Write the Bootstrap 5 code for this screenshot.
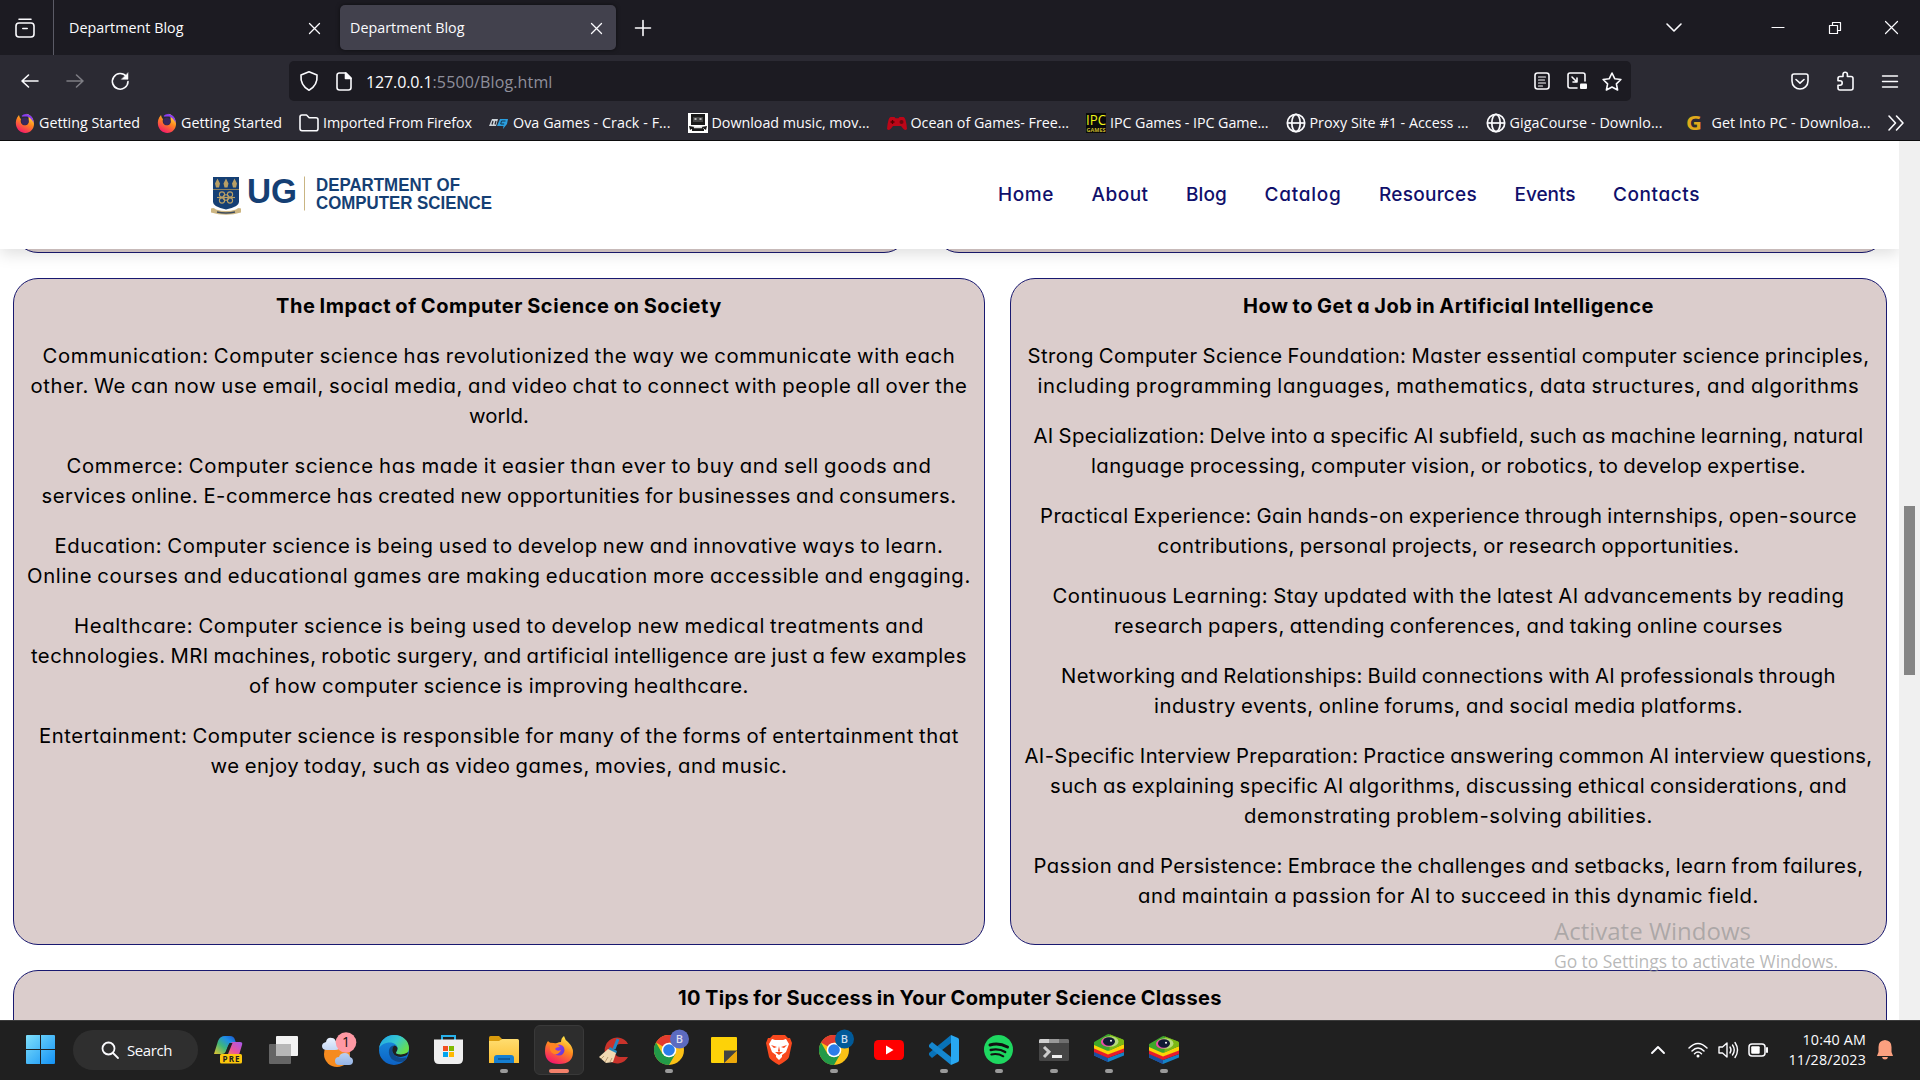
<!DOCTYPE html>
<html lang="en">
<head>
<meta charset="utf-8">
<title>Department Blog</title>
<link href="https://cdn.jsdelivr.net/npm/bootstrap@5.3.0/dist/css/bootstrap.min.css" rel="stylesheet">
<style>
body{width:1920px;height:1080px;overflow:hidden;background:#fff;font-family:"Open Sans","Noto Sans",sans-serif;font-size:14.3px;line-height:20px;color:#fbfbfe}
svg{display:block;flex:none;overflow:visible}
[data-w]{white-space:nowrap;display:inline-block;flex:none}
.ic{fill:none;stroke:#fbfbfe;stroke-width:1.6;stroke-linecap:round;stroke-linejoin:round}
.tabstrip{height:55px;background:#1c1b22}
.viewbtn{width:54px;height:55px;border-right:1px solid #5b5b66;padding-left:15px}
.tab-item{width:276px;height:45px;padding:1px 14px 0 10px;border-radius:5px}
.tab-item.current{background:#42414d;box-shadow:0 0 4px #0008}
.tab-first{margin-left:5px;margin-right:5px;padding-right:15px}
.toolbar{height:50px;background:#2b2a33;padding-top:2px}
.urlbar{width:1342px;height:40px;background:#1c1b22;border-radius:5px;margin-left:160px;padding:0 10px;font-size:16px}
.urlbar span{padding-top:1px}
.winctl{padding-right:22px}
.dimmed{color:#8f8f9b}
.bookmarks{height:36px;background:#2b2a33;border-bottom:1px solid #0c0c0d;gap:17px;padding:1px 0 0 15px}
.bookmarks>div{gap:4px}
.bmk{width:20px;height:20px}
.viewport{height:879px;overflow:hidden;position:relative;background:#fff}
.pagehead{height:108px;background:#fff;box-shadow:0 5px 15px rgba(0,0,0,.13);position:relative;z-index:2;width:1899px;padding-left:210px;padding-right:199px}
.pagehead nav{gap:37.5px;font-family:Inter,sans-serif;font-weight:500;font-size:19px;color:#10106b;font-feature-settings:"cv11"}
.posts{width:1899px;padding:0 12px 0 13px;font-family:Inter,sans-serif;font-size:20.3px;line-height:30px;color:#000;font-feature-settings:"cv11";word-spacing:-1.2px}
.post{background:#dbcdcc;border:1px solid #191970;border-radius:25px;text-align:center}
.post p,.post h2{margin:0 0 20px;font-size:inherit;line-height:30px}
.post h2{font-weight:700;font-size:20px}
.post .ln{display:block;height:30px}
.post .ln>span{display:inline-block}
.stub{height:60px;margin-top:-56px}
.stub-a{width:896px}
.pair{gap:25px}
.pair-main{margin-top:25px}
.post-a{width:972px;height:667px;padding-top:12px}
.post-b{width:877px;height:667px;padding-top:12px}
.post-c{height:120px;margin-top:25px;padding-top:12px}
.scroller{position:absolute;right:0;top:0;width:21px;height:879px;background:#f0f0f0;padding:365px 0 0 5px;z-index:3}
.thumb{width:11px;height:169px;background:#858585}
.watermark{position:absolute;left:1554px;top:774px;color:rgba(148,148,148,.66);z-index:3}
.wm1{font-size:24px;line-height:32px}
.wm2{font-size:17.5px;line-height:28px}
.taskbar{height:60px;background:#202020;border-top:1px solid #3b3b3b;padding:0 0 2px 26px}
.searchpill{width:125px;height:40px;border-radius:20px;background:#2f2f2f;margin-left:18px;margin-right:3px;padding-left:28px;gap:8px;font-size:15px}
.slot{width:55px;height:59px;position:relative;flex:none}
.slot.run::after{content:"";position:absolute;left:23.5px;bottom:6px;width:8px;height:4px;border-radius:2px;background:#9a9a9a}
.slot.live::before{content:"";position:absolute;left:3px;top:5px;width:50px;height:50px;border-radius:6px;background:#2d2d2d;border:1px solid #393939}
.slot.live::after{left:18px;width:20px;background:#f4816b}
.slot svg{position:relative}
.tray{margin-left:auto;padding-right:27px}
</style>
<script src="https://cdn.jsdelivr.net/npm/bootstrap@5.3.0/dist/js/bootstrap.bundle.min.js"></script>
</head>
<body>
<svg width="0" height="0" class="position-absolute">
<defs>
<linearGradient id="gWin" x1="0" y1="0" x2="1" y2="1"><stop offset="0" stop-color="#7fe0fb"/><stop offset="1" stop-color="#1392f5"/></linearGradient>
<linearGradient id="gFx" x1=".8" y1="0" x2=".3" y2="1"><stop offset="0" stop-color="#fff44f"/><stop offset=".45" stop-color="#ff8a1e"/><stop offset="1" stop-color="#f5156c"/></linearGradient>
<linearGradient id="gPu" x1="0" y1="0" x2="1" y2="1"><stop offset="0" stop-color="#a33bf0"/><stop offset="1" stop-color="#5a3bd8"/></linearGradient>
<linearGradient id="gEd" x1="0" y1="0" x2="1" y2=".6"><stop offset="0" stop-color="#1da1e8"/><stop offset=".55" stop-color="#36c8d0"/><stop offset="1" stop-color="#68e04a"/></linearGradient>
<linearGradient id="gEb" x1="0" y1="0" x2="0" y2="1"><stop offset="0" stop-color="#1a90e0"/><stop offset="1" stop-color="#0c62c4"/></linearGradient>
<linearGradient id="gFo" x1="0" y1="0" x2="0" y2="1"><stop offset="0" stop-color="#ffdd70"/><stop offset="1" stop-color="#fcbf32"/></linearGradient>
<linearGradient id="gCo" x1="0" y1="1" x2="1" y2="0"><stop offset="0" stop-color="#e8c52c"/><stop offset=".4" stop-color="#3fb67a"/><stop offset=".7" stop-color="#1f8fe8"/><stop offset="1" stop-color="#1b50c8"/></linearGradient>
<linearGradient id="gCp" x1="1" y1="0" x2="0" y2="1"><stop offset="0" stop-color="#a657f0"/><stop offset=".6" stop-color="#e8559a"/><stop offset="1" stop-color="#f79058"/></linearGradient>
<linearGradient id="gCl" x1="0" y1="0" x2="0" y2="1"><stop offset="0" stop-color="#eaf2ff"/><stop offset="1" stop-color="#95b5e6"/></linearGradient>
<symbol id="fxs" viewBox="0 0 20 20"><path d="M4 2C1 5 .5 9 1 12c1 5 5 8 9.300 7.900 5-.1 8.700-4 8.700-9C19 6 16 2 11.500.8c1.800 2 2.500 4 2 6.200.8 3-1 5.300-3.600 5.300C6.500 12.300 5 9 6 6 4.800 5 4.300 3.500 4 2z" fill="url(#gFx)"/><path d="M6.500 3C9 .2 13 .2 16 3c2 2 2.800 4.500 2.600 7C17 6 14 3.500 11 3.500S7.500 4 6.500 3z" fill="#8a3df0"/><path d="M6.500 6.200C8 4.500 11 4 13 6c1.500 3 0 6-3 6S5.700 9 6.500 6.200z" fill="#38285e"/></symbol>
<symbol id="globe" viewBox="0 0 20 20"><g fill="none" stroke="#fbfbfe" stroke-width="1.700"><circle cx="10" cy="10" r="8.700"/><ellipse cx="10" cy="10" rx="4.200" ry="8.700"/><path d="M1.300 10h17.400"/></g></symbol>
<symbol id="chrome" viewBox="0 0 30 30"><circle cx="15" cy="15" r="15" fill="#fbc116"/><path d="M15 15 2 7.500A15 15 0 0 1 28 7.500H15z" fill="#e33b2e"/><path d="M2 7.500A15 15 0 0 0 15 30l6.500-11.300H8.500z" fill="#229a48"/><circle cx="15" cy="15" r="7.300" fill="#fff"/><circle cx="15" cy="15" r="5.800" fill="#2b7de9"/></symbol>
<symbol id="bstack" viewBox="0 0 30 28"><path d="M0 18v3.500L14 28l16-6.500V18l-16 6z" fill="#1583c7"/><path d="M0 18v3.500L14 28v-4z" fill="#1c4fa0"/><path d="M0 14v4l14 6 16-6v-4l-16 6z" fill="#e81b2c"/><path d="M0 10v4.500l14 6 16-6V10l-16 6z" fill="#fdd306"/><path d="M0 8.500Q0 8 1 7.500L13 .4q1.500-.6 3 0L29 5.500q1 .5 1 1.500v3L15.500 16.500q-1.500.6-3 0L0 11z" fill="#3fa62b"/><path d="M16 .4 29 5.500q1 .5 1 1.500v3l-14.500 6.500z" fill="#7cb815"/><ellipse cx="16" cy="7.500" rx="8.500" ry="5.200" fill="#b8dc7c"/><ellipse cx="13.500" cy="8" rx="6.500" ry="4.500" fill="#ec4aa6"/><ellipse cx="15" cy="7.500" rx="6" ry="4.200" fill="#101a34"/><circle cx="17" cy="6.800" r="1" fill="#fff"/></symbol>
</defs></svg>

<div class="tabstrip d-flex align-items-center">
  <div class="viewbtn d-flex align-items-center"><svg class="ic" width="20" height="20" viewBox="0 0 20 20"><rect x="1" y="5" width="18" height="14" rx="3"/><path d="M4 1.200h12M7.800 10.500h4.400"/></svg></div>
  <div class="tab-item tab-first d-flex align-items-center justify-content-between"><span data-w="114.500">Department Blog</span><svg class="ic" width="11" height="11"><path d="m.5.5 10 10m0-10-10 10" stroke-width="1.300"/></svg></div>
  <div class="tab-item current d-flex align-items-center justify-content-between"><span data-w="114.500">Department Blog</span><svg class="ic" width="11" height="11"><path d="m.5.5 10 10m0-10-10 10" stroke-width="1.300"/></svg></div>
  <svg class="ic ms-3" width="22" height="16"><path d="M8 .5v15M.5 8h15" transform="translate(3)"/></svg>
  <div class="winctl d-flex align-items-center ms-auto">
    <svg class="ic" width="16" height="9" style="margin-right:90px"><path d="m1 1 7 7 7-7"/></svg>
    <svg class="ic" width="12" height="12" style="margin-right:45px"><path d="M0 5.500h12" stroke-width="1.200"/></svg>
    <svg class="ic" width="12" height="12" style="margin-right:44px"><path d="M.5 3.500h8v8h-8zM3.500 3.500v-3h8v8h-3" stroke-width="1.200"/></svg>
    <svg class="ic" width="13" height="13"><path d="m.5.5 12 12m0-12-12 12" stroke-width="1.200"/></svg>
  </div>
</div>

<div class="toolbar d-flex align-items-center">
  <svg class="ic" width="18" height="14" style="margin-left:21px"><path d="M17 7H1M7.500 1 1 7l6.500 6"/></svg>
  <svg class="ic" width="18" height="14" style="margin-left:27px;opacity:.4"><path d="M1 7h16M10.500 1 17 7l-6.500 6"/></svg>
  <svg class="ic" width="18" height="18" style="margin-left:27px"><path d="M15.300 4.500A7.800 7.800 0 1 0 17 9.500"/><path d="M17 1v6.300h-6.300z" fill="#fbfbfe" stroke-width=".5"/></svg>
  <div class="urlbar d-flex align-items-center">
    <svg class="ic" width="20" height="20"><path d="M10 .8 18 4c.6 7-1.200 11.500-8 15.200C3.200 15.500 1.400 11 2 4z"/></svg>
    <svg class="ic" width="16" height="19" style="margin-left:17px"><path d="M3 1h7l5 5v9.500a2.500 2.500 0 0 1-2.500 2.500h-9A2.500 2.500 0 0 1 1 15.500V3.500A2.500 2.500 0 0 1 3 1z"/><path d="M9.500 1v5.500H15z" fill="#fbfbfe"/></svg>
    <span data-w="66.500" style="margin-left:14px">127.0.0.1</span><span class="dimmed" data-w="120">:5500/Blog.html</span>
    <svg class="ic ms-auto" width="16" height="18"><rect x="1" y="1" width="14" height="16" rx="2.500"/><path d="M4.500 5h7M4.500 8h6M4.500 11h7M4.500 14h4" stroke-width="1.200"/></svg>
    <svg class="ic" width="20" height="18" style="margin-left:17px"><path d="M10 16H3a2 2 0 0 1-2-2V3a2 2 0 0 1 2-2h13a2 2 0 0 1 2 2v6M5 5l5 5m0-4v4H6"/><rect x="13" y="11.500" width="7" height="5.500" rx="1" fill="#fbfbfe" stroke="none"/></svg>
    <svg class="ic" width="20" height="19" style="margin-left:15px;margin-right:-1px"><path d="m10 1 2.700 5.700 6.200.8-4.500 4.300 1.200 6.200L10 15l-5.600 3 1.200-6.200L1.100 7.500l6.200-.8z"/></svg>
  </div>
  <svg class="ic" width="18" height="17" style="margin-left:160px"><path d="M3 1h12a2 2 0 0 1 2 2v5c0 5-4 8-8 8s-8-3-8-8V3a2 2 0 0 1 2-2zM5 6.500l4 3.700 4-3.700"/></svg>
  <svg class="ic" width="18" height="20" style="margin-left:27px"><path d="M2 7.500q0-2 2-2h3V3.400a2.200 2.200 0 0 1 4.400 0v2.100H15q2 0 2 2V17q0 2-2 2H4q-2 0-2-2v-2.800h2a2.200 2.200 0 0 0 0-4.400H2z"/></svg>
  <svg class="ic" width="16" height="13" style="margin-left:28px"><path d="M.5 1h15M.5 6.500h15M.5 12h15" stroke-width="1.400"/></svg>
</div>

<div class="bookmarks d-flex align-items-center">
  <div class="d-flex align-items-center"><svg class="bmk"><use href="#fxs"/></svg><span data-w="101">Getting Started</span></div>
  <div class="d-flex align-items-center"><svg class="bmk"><use href="#fxs"/></svg><span data-w="101">Getting Started</span></div>
  <div class="d-flex align-items-center"><svg class="bmk ic" viewBox="0 0 20 20"><path d="M1 15.500V4q0-2 2-2h4.500l2.700 2.700H17q2 0 2 2v9q0 2-2 2H3q-2 0-2-2.200z"/></svg><span data-w="149">Imported From Firefox</span></div>
  <div class="d-flex align-items-center"><svg class="bmk" viewBox="0 0 20 20"><path d="M3 6h6l-2 7H0z" fill="#cdd3d9"/><path d="M4 8 3 11.500m4-3.500-1 3.500" stroke="#2b2a33" stroke-width="1.300" fill="none"/><path d="M11 6h8l-1 5-4 5 .5-3H8z" fill="#2b9fe0"/><path d="M16.500 8h-4l-.8 3h3.500" stroke="#12344d" fill="none"/></svg><span data-w="157.500">Ova Games - Crack - F...</span></div>
  <div class="d-flex align-items-center"><svg class="bmk" viewBox="0 0 20 20"><path d="M0 0h20v20H0z" fill="#fff"/><path d="M3 1h14v11H3zM1 13l6 1-5 3zM19 13l-6 1 5 3zM4 15h12v3H4z" fill="#191919"/><path d="M5 4h10v5H5z" fill="#444"/><path d="M6.500 6h2m3 0h2M6 14.500h8" stroke="#ddd" stroke-width="1.500"/></svg><span data-w="158">Download music, mov...</span></div>
  <div class="d-flex align-items-center"><svg class="bmk" viewBox="0 0 20 20"><path d="M3.500 4h4l1 1.200h3L12.500 4h4Q19 4.500 20 16q-2 2-4-.5l-2-2.500H6l-2 2.500Q2 18 0 16 1 4.500 3.500 4z" fill="#bd0618"/><path d="M5.500 7v4M3.500 9h4" stroke="#500" stroke-width="1.300"/><circle cx="14.500" cy="9" r="2" fill="#6c0610"/></svg><span data-w="158.500">Ocean of Games- Free...</span></div>
  <div class="d-flex align-items-center"><svg class="bmk" viewBox="0 0 20 20"><path d="M0 0h20v20H0z" fill="#0a0a0a"/><text x="0" y="11.500" textLength="20" lengthAdjust="spacingAndGlyphs" font-family="Open Sans" font-size="14.500" fill="#eff319">IPC</text><text x=".5" y="19" textLength="19" lengthAdjust="spacingAndGlyphs" font-family="Open Sans" font-weight="700" font-size="6" fill="#c8b72a">GAMES</text></svg><span data-w="158.500">IPC Games - IPC Game...</span></div>
  <div class="d-flex align-items-center"><svg class="bmk"><use href="#globe"/></svg><span data-w="159">Proxy Site #1 - Access ...</span></div>
  <div class="d-flex align-items-center"><svg class="bmk"><use href="#globe"/></svg><span data-w="153">GigaCourse - Downlo...</span></div>
  <div class="d-flex align-items-center ps-1 ms-1"><svg class="bmk" viewBox="0 0 20 20"><text x="-2" y="17" textLength="16" lengthAdjust="spacingAndGlyphs" font-family="Open Sans" font-weight="700" font-size="20" fill="#e0a91b">G</text></svg><span data-w="159">Get Into PC - Downloa...</span></div>
  <svg class="ic" width="16" height="14"><path d="m1 0 6.500 7L1 14M8.500 0 15 7l-6.500 7"/></svg>
</div>

<main class="viewport">
  <header class="pagehead d-flex align-items-center justify-content-between">
    <svg width="290" height="44" viewBox="210 173.500 290 44" font-family="Liberation Sans,Arial,sans-serif" font-weight="700" fill="#153f74">
      <path d="M213 177.500h26v25q0 5-13 7.500-13-2.500-13-7.500z"/>
      <path d="M213 190h26" stroke="#a9925c" stroke-width=".8"/>
      <g fill="#b89f65"><path d="m217.500 179 2.500 5-1 4h-3l-1-4zM226 179l2.500 5-1 4h-3l-1-4zM234.500 179l2.500 5-1 4h-3l-1-4z"/></g>
      <g fill="none" stroke="#b89f65" stroke-width="1.100"><circle cx="222" cy="195" r="2.600"/><circle cx="230" cy="195" r="2.600"/><circle cx="222" cy="201" r="2.600"/><circle cx="230" cy="201" r="2.600"/><circle cx="226" cy="198" r="2.800"/><path d="M217 198h18"/></g>
      <path d="M211 209q3-1.500 5 1 10 3 20 0 2-2.500 5-1v4q-15 4.500-30 0z" fill="#cdb682"/><path d="M217 212.500q9 2 18 0" stroke="#3d4b5c" stroke-width="1.500" fill="none"/>
      <text x="247" y="203.500" font-size="35.500" textLength="50" lengthAdjust="spacingAndGlyphs">UG</text>
      <path d="M304.500 177v34" stroke="#c9b583"/>
      <text x="316" y="191.300" font-size="17.800" textLength="144" lengthAdjust="spacingAndGlyphs">DEPARTMENT OF</text>
      <text x="316" y="209.500" font-size="17.800" textLength="176" lengthAdjust="spacingAndGlyphs">COMPUTER SCIENCE</text>
    </svg>
    <nav class="d-flex"><span data-w="56">Home</span><span data-w="57">About</span><span data-w="41">Blog</span><span data-w="77">Catalog</span><span data-w="98">Resources</span><span data-w="61">Events</span><span data-w="87">Contacts</span></nav>
  </header>

  <div class="posts">
    <div class="d-flex pair"><div class="post stub stub-a"></div><div class="post stub flex-grow-1"></div></div>
    <div class="d-flex pair pair-main">
      <article class="post post-a">
        <h2><span data-w="446">The Impact of Computer Science on Society</span></h2>
        <p><span class="ln"><span data-w="913">Communication: Computer science has revolutionized the way we communicate with each</span></span><span class="ln"><span data-w="937">other. We can now use email, social media, and video chat to connect with people all over the</span></span><span class="ln"><span data-w="60">world.</span></span></p>
        <p><span class="ln"><span data-w="865">Commerce: Computer science has made it easier than ever to buy and sell goods and</span></span><span class="ln"><span data-w="915">services online. E-commerce has created new opportunities for businesses and consumers.</span></span></p>
        <p><span class="ln"><span data-w="889">Education: Computer science is being used to develop new and innovative ways to learn.</span></span><span class="ln"><span data-w="944">Online courses and educational games are making education more accessible and engaging.</span></span></p>
        <p><span class="ln"><span data-w="850">Healthcare: Computer science is being used to develop new medical treatments and</span></span><span class="ln"><span data-w="936">technologies. MRI machines, robotic surgery, and artificial intelligence are just a few examples</span></span><span class="ln"><span data-w="500">of how computer science is improving healthcare.</span></span></p>
        <p><span class="ln"><span data-w="920">Entertainment: Computer science is responsible for many of the forms of entertainment that</span></span><span class="ln"><span data-w="577">we enjoy today, such as video games, movies, and music.</span></span></p>
      </article>
      <article class="post post-b">
        <h2><span data-w="411">How to Get a Job in Artificial Intelligence</span></h2>
        <p><span class="ln"><span data-w="842">Strong Computer Science Foundation: Master essential computer science principles,</span></span><span class="ln"><span data-w="822">including programming languages, mathematics, data structures, and algorithms</span></span></p>
        <p><span class="ln"><span data-w="830">AI Specialization: Delve into a specific AI subfield, such as machine learning, natural</span></span><span class="ln"><span data-w="715">language processing, computer vision, or robotics, to develop expertise.</span></span></p>
        <p><span class="ln"><span data-w="817">Practical Experience: Gain hands-on experience through internships, open-source</span></span><span class="ln"><span data-w="582">contributions, personal projects, or research opportunities.</span></span></p>
        <p><span class="ln"><span data-w="792">Continuous Learning: Stay updated with the latest AI advancements by reading</span></span><span class="ln"><span data-w="669">research papers, attending conferences, and taking online courses</span></span></p>
        <p><span class="ln"><span data-w="775">Networking and Relationships: Build connections with AI professionals through</span></span><span class="ln"><span data-w="589">industry events, online forums, and social media platforms.</span></span></p>
        <p><span class="ln"><span data-w="848">AI-Specific Interview Preparation: Practice answering common AI interview questions,</span></span><span class="ln"><span data-w="797">such as explaining specific AI algorithms, discussing ethical considerations, and</span></span><span class="ln"><span data-w="409">demonstrating problem-solving abilities.</span></span></p>
        <p><span class="ln"><span data-w="830">Passion and Persistence: Embrace the challenges and setbacks, learn from failures,</span></span><span class="ln"><span data-w="621">and maintain a passion for AI to succeed in this dynamic field.</span></span></p>
      </article>
    </div>
    <article class="post post-c"><h2><span data-w="544">10 Tips for Success in Your Computer Science Classes</span></h2></article>
  </div>
  <div class="scroller"><div class="thumb"></div></div>
  <div class="watermark"><div class="wm1"><span data-w="197">Activate Windows</span></div><div class="wm2"><span data-w="284">Go to Settings to activate Windows.</span></div></div>
</main>

<footer class="taskbar d-flex align-items-center">
  <svg width="29" height="29" viewBox="0 0 29 29"><path d="M0 1q0-1 1-1h13v14H0zM15 0h13q1 0 1 1v13H15zM0 15h14v14H1q-1 0-1-1zM15 15h14v13q0 1-1 1H15z" fill="url(#gWin)"/></svg>
  <div class="searchpill d-flex align-items-center"><svg class="ic" width="18" height="18"><circle cx="7.500" cy="7.500" r="6" stroke-width="1.800"/><path d="m12 12 5 5" stroke-width="1.800"/></svg><span data-w="45">Search</span></div>
  <div class="slot d-flex align-items-center justify-content-center"><svg width="29" height="29" viewBox="0 0 29 29"><path d="M0 19 4 6q2-5 7-5h5q4 0 5 4l1 3h-4q-3 0-4 3l-2 5q-1 3-4 3H1z" fill="url(#gCo)"/><path d="M12 20 16 9q1-2 3-2h7q3 0 2 3l-3 10z" fill="url(#gCp)"/><path d="M11 19 15.500 8h3L14 19z" fill="#202020"/><rect x="6" y="19" width="22" height="9.500" rx="1.500" fill="#fdc70c"/><text x="8.500" y="26.800" font-size="8" font-weight="700" textLength="17" fill="#202020">PRE</text></svg></div>
  <div class="slot d-flex align-items-center justify-content-center"><svg width="29" height="28" viewBox="0 0 29 28"><rect y="8" width="22" height="20" rx="1" fill="#656565"/><rect x="7" width="22" height="20" rx="1" fill="#f2f2f2"/><path d="M7 8h15v12H7z" fill="#b7b7b7"/></svg></div>
  <div class="slot d-flex align-items-center justify-content-center"><svg width="34" height="34" viewBox="0 0 34 34"><circle cx="15" cy="21" r="13" fill="#f68b1f"/><path d="M5 17q-5 0-5-4 0-3 4-4 1-5 6-4 3 0 4 4 4 1 4 4 0 4-5 4zM17 32q-4 0-4-4t4-4q1-4 6-4 4 0 5 4 3 1 3 4 0 4-4 4z" fill="url(#gCl)"/><circle cx="24" cy="9.500" r="10.300" fill="#ff99a4"/><text x="24" y="14.300" text-anchor="middle" font-size="14" fill="#111">1</text></svg></div>
  <div class="slot d-flex align-items-center justify-content-center"><svg width="30" height="30" viewBox="0 0 30 30"><circle cx="15" cy="15" r="15" fill="url(#gEb)"/><path d="M0 14C1 5 8 0 15 0c9 0 15 6 15 13 0 5-4 7-8 7-3 0-5-1-5-2.500 0-1 1.500-1.500 1.500-4C18.500 10 15 7.500 11 7.500 6 7.500 1 10 0 14z" fill="url(#gEd)"/><path d="M10 15c-1 7 4 12 11 12 3 0 6-1.500 7-4l-1.500-.5C22 24 15 22 13.500 17c-1-3 0-5 2-6.500-3 0-5 2-5.500 4.500z" fill="#114a8b"/><path d="M17 18.500C16.500 17 18.500 16 18.500 13.500c0-1.500-1-2.500-3-3-3 2-3 6.500 0 9.500 4 3 9 2 12.500 0l1.500-3q-6 4-12.500 1.500z" fill="#202020"/></svg></div>
  <div class="slot d-flex align-items-center justify-content-center"><svg width="29" height="29" viewBox="0 0 29 29"><path d="M8 6V1h13v5" fill="none" stroke="#28b1ea" stroke-width="2"/><path d="M0 4.500h29V24q0 5-5 5H5q-5 0-5-5z" fill="#efefef"/><path d="M9 11h5v5H9z" fill="#f25022"/><path d="M15 11h5v5h-5z" fill="#7fba00"/><path d="M9 17h5v5H9z" fill="#00a4ef"/><path d="M15 17h5v5h-5z" fill="#ffb900"/></svg></div>
  <div class="slot run d-flex align-items-center justify-content-center"><svg width="30" height="27" viewBox="0 0 30 27"><path d="M0 1.500Q0 0 1.500 0H10l3 3-2 4H0z" fill="#d99b0c"/><path d="M0 5h10l3-2h15.500Q30 3 30 4.500V27H0z" fill="url(#gFo)"/><path d="M5 27v-5q0-3 3-3h14q3 0 3 3v5z" fill="#167fd1"/><path d="M9 23h12" stroke="#0b4a85" stroke-width="1.300"/></svg></div>
  <div class="slot run live d-flex align-items-center justify-content-center"><svg width="28" height="28" viewBox="0 0 28 28"><path d="M3 5q2 3 5 3l4-1q2-1 4-1Q16 2 19 0q1 4 4 6 5 5 5 10 0 12-14 12T0 15q0-6 3-10z" fill="url(#gFx)"/><circle cx="14" cy="14" r="5.500" fill="url(#gPu)"/><path d="M2 6q3 1 7 1 4 1 6 4-4 0-5 2 2 3 6 1-2 5-7 4-5-2-4-8z" fill="#ff8422"/></svg></div>
  <div class="slot d-flex align-items-center justify-content-center"><svg width="30" height="28" viewBox="0 0 30 28"><path d="M29 8A12.500 13 0 1 0 29 21h-8a6 6.500 0 1 1 0-13z" fill="#c9332b"/><path d="m19 3-4 10" stroke="#2088c8" stroke-width="3"/><path d="m11 11 7 4-1 3-8-4z" fill="#2588bb"/><path d="m9 13 8 4-3 9-7 1-7-6z" fill="#f1d9b1"/><path d="m5 20-3 3m7-2-3 5m7-4-2 4" stroke="#a88a62" stroke-width=".8"/></svg></div>
  <div class="slot run d-flex align-items-center justify-content-center"><svg width="30" height="30" viewBox="0 0 30 30"><use href="#chrome" width="30" height="30"/><circle cx="25.500" cy="4" r="9.500" fill="#5c6bc0"/><text x="25.500" y="8" text-anchor="middle" font-size="11" font-weight="600" fill="#dde">B</text></svg></div>
  <div class="slot d-flex align-items-center justify-content-center"><svg width="26" height="26" viewBox="0 0 26 26"><path d="M0 1q0-1 1-1h24q1 0 1 1v12L13 26H1q-1 0-1-1z" fill="#fdd208"/><path d="M26 13 13 26h12q1 0 1-1z" fill="#eda90b"/><path d="M13 13.500h13L13 26z" fill="#424242"/></svg></div>
  <div class="slot d-flex align-items-center justify-content-center"><svg width="26" height="30" viewBox="0 0 26 30"><path d="M7 0h12l3 3h2l2 5-3 14q-1 3-10 8Q4 25 3 22L0 8l2-5h2z" fill="#f9491e"/><path d="m6 4 3 1h8l3-1 3 5-3 8-4 3v2l-3 3-3-3v-2l-4-3-3-8z" fill="#fff"/><path d="m5 10 6 2-3 1zM21 10l-6 2 3 1zM13 11l-1 5 1 1 1-1zM9 17l4 3 4-3" fill="#f9491e"/></svg></div>
  <div class="slot run d-flex align-items-center justify-content-center"><svg width="30" height="30" viewBox="0 0 30 30"><use href="#chrome" width="30" height="30"/><circle cx="25.500" cy="4" r="9.500" fill="#015a99"/><text x="25.500" y="8" text-anchor="middle" font-size="11" font-weight="600" fill="#cde">B</text></svg></div>
  <div class="slot d-flex align-items-center justify-content-center"><svg width="30" height="20" viewBox="0 0 30 20"><rect width="30" height="20" rx="4.500" fill="red"/><path d="m12 5.500 7.500 4.500-7.500 4.500z" fill="#fff"/></svg></div>
  <div class="slot run d-flex align-items-center justify-content-center"><svg width="30" height="30" viewBox="0 0 30 30"><path d="m22 8-19 15-3-3v-2L22 0z" fill="#0872b8"/><path d="M22 22 3 7 0 10v2l22 18z" fill="#1587cf"/><path d="m22 0 7 3q1 .5 1 2v20q0 1.500-1 2l-7 3z" fill="#28a8f2"/></svg></div>
  <div class="slot run d-flex align-items-center justify-content-center"><svg width="29" height="29" viewBox="0 0 29 29"><circle cx="14.500" cy="14.500" r="14.500" fill="#1ed760"/><g fill="none" stroke="#111" stroke-linecap="round"><path d="M6 10q9-2.500 17.500 2" stroke-width="3"/><path d="M6.700 15q8-2 14.500 2" stroke-width="2.400"/><path d="M7.300 19.500q6.500-1.500 12 1.800" stroke-width="2"/></g></svg></div>
  <div class="slot run d-flex align-items-center justify-content-center"><svg width="30" height="22" viewBox="0 0 30 22"><rect width="30" height="22" rx="1.500" fill="#464646"/><path d="M0 1.500Q0 0 1.500 0H10v4H0z" fill="#d0d0d0"/><path d="M10 0h10v4H10z" fill="#999"/><path d="M20 0h8.500Q30 0 30 1.500V4H20z" fill="#6f6f6f"/><path d="m5 8 5 4.800L5 18" fill="none" stroke="#ccc" stroke-width="3"/><path d="M13 16h10v3H13z" fill="#eee"/></svg></div>
  <div class="slot run d-flex align-items-center justify-content-center"><svg class="mb-1" width="30" height="28"><use href="#bstack"/></svg></div>
  <div class="slot run d-flex align-items-center justify-content-center"><svg width="30" height="28"><use href="#bstack"/></svg></div>
  <div class="tray d-flex align-items-center">
    <svg class="ic" width="14" height="8" style="margin-right:23px"><path d="m1 7 6-6 6 6" stroke-width="1.900"/></svg>
    <svg class="ic" width="20" height="16" style="margin-right:10px"><path d="M1 6q9-9 18 0M4 9q6-6 12 0M6.500 11.700q3.500-3.400 7 0" stroke-width="1.500"/><circle cx="10" cy="14" r="1.500" fill="#fff" stroke="none"/></svg>
    <svg class="ic" width="20" height="18" style="margin-right:10px"><path d="M1 6h3.500L9 2v14l-4.500-4H1zM12 6q2 3 0 6M14.500 4q3.500 5 0 10M17 1.500q5 7.500 0 15" stroke-width="1.400"/></svg>
    <svg class="ic" width="21" height="14" style="margin-right:20px"><rect x="1" y="1" width="16" height="12" rx="3" stroke-width="1.500"/><rect x="3.200" y="3.200" width="8.500" height="7.600" rx="1" fill="#fff" stroke="none"/><path d="M19 5v4" stroke-width="2"/></svg>
    <div class="text-end"><div><span data-w="63.500">10:40 AM</span></div><div><span data-w="77.500">11/28/2023</span></div></div>
    <svg width="16" height="20" style="margin-left:11px" viewBox="0 0 16 20"><path d="M8 0q6.500.5 6.500 7v5l1.500 4H0l1.500-4V7Q1.500.5 8 0zM5 17h6q-.5 2.500-3 2.500T5 17z" fill="#fba07f"/></svg>
  </div>
</footer>
<script>
// Tracks each label so that it fills its measured width
document.querySelectorAll('[data-w]').forEach(function(el){
  var w = parseFloat(el.dataset.w), n = el.textContent.length;
  el.style.letterSpacing = ((w - el.getBoundingClientRect().width) / n) + 'px';
});
</script>
</body>
</html>
